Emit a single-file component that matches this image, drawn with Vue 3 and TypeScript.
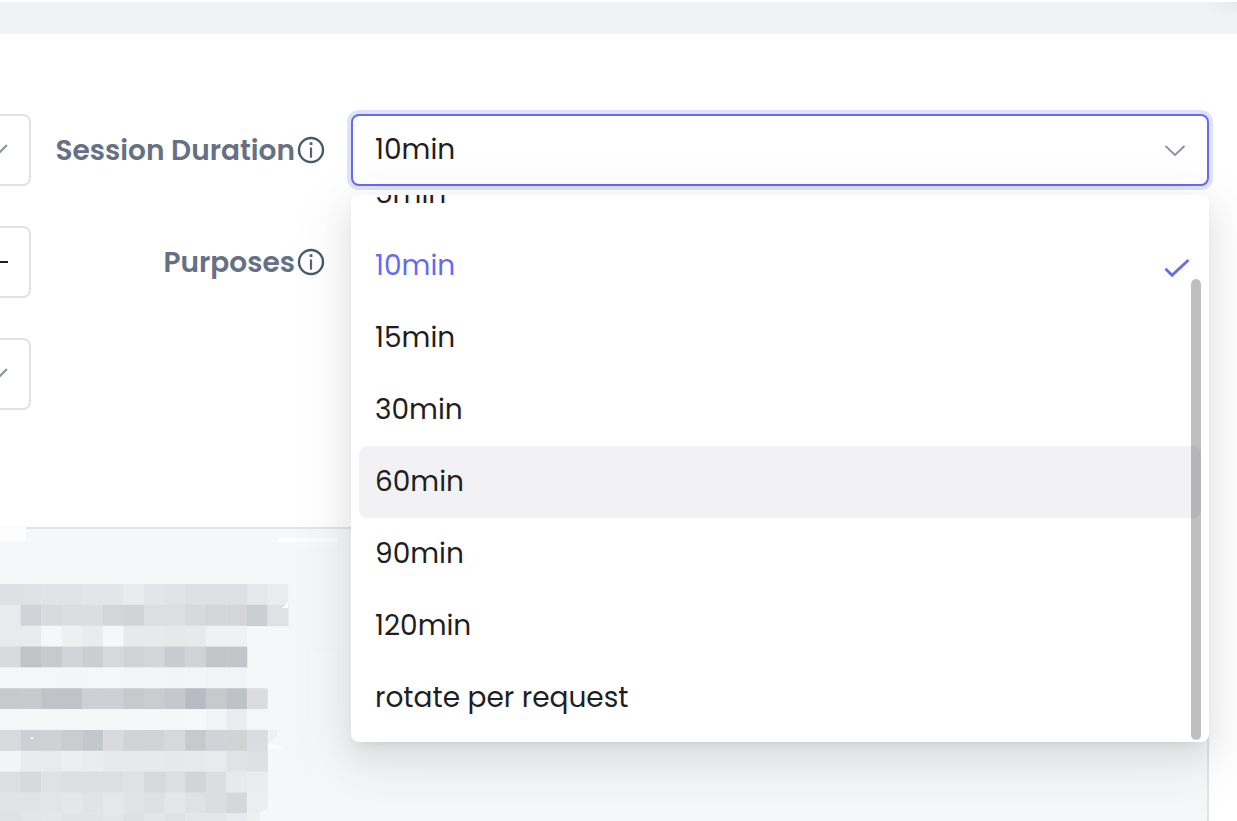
<script setup lang="ts">
import { onMounted, ref } from 'vue'

const durations: string[] = ['5min', '10min', '15min', '30min', '60min', '90min', '120min', 'rotate per request']
const duration = ref('10min')
const active = ref('60min')
const open = ref(true)
const list = ref<HTMLElement | null>(null)

function choose(value: string): void {
  duration.value = value
  open.value = false
}

onMounted(() => {
  if (list.value) list.value.scrollTop = list.value.scrollHeight
})

// Shades of the redacted block, one entry per cell; "-" leaves the cell empty.
const rows: string[] = [
  'dfe0e3 e0e1e4 e2e3e6 e2e3e6 e4e5e8 e4e5e8 eaebed e4e5e8 e2e3e6 dfe0e3 dfe0e3 dfe0e3 e6e7ea ebecee',
  'e9eaed cfd3d7 d8dadd dcdde0 dcdde0 d4d5d8 d2d3d6 dcdee1 dddee1 d8d9dc d4d5d8 d4d5d8 cbced2 e0e1e4',
  'e9eaed e9eaed f6f7f9 eeeff0 eaebed f6f7f9 e8e9ec e8e9eb e7e8e9 e8e9ea f0f1f3 f0f1f3 - -',
  'd9dadd c1c3c8 c6c9cd d3d4d7 cccdd0 d7d8db cfd3d7 d5d6d9 cacbcf cfd3d7 c3c5ca c3c5ca - -',
  'f5f6f7 f5f6f7 f5f6f8 f4f5f7 f5f6f8 f5f6f8 f4f5f7 f4f5f7 f3f4f6 f4f5f7 f2f3f5 f2f3f5 - -',
  'c7cacd c9cacd c0c3c7 c0c3c7 cdd0d4 cdd0d4 c6cacd cbccd0 c5c9cd b8bbc6 c8c9cd bfc2c6 dbdce0 -',
  'f6f7f8 f6f7f8 f6f7f8 f5f6f8 f6f7f8 f6f7f8 f6f7f8 f6f7f8 f6f7f8 f7f8f9 f2f3f6 ebecf1 f5f6f8 -',
  'd9dadd cdd1d5 d0d1d5 cbccd0 c4c8cc d9dadd d0d3d6 d1d3d6 d7d8db c7cacd d0d3d7 d1d3d5 dbdce0 -',
  'f3f4f6 eaebed e8eaed edeef1 ebecef e8e9eb e8e9eb e8e9eb e7e8ea e8e9eb e9eaec e2e3e7 dfe0e4 -',
  'dddee1 d6d8db e0e1e4 dddee1 dddee1 dddee1 e0e1e4 d6d8db dddee1 d1d5d7 dcdde0 e8e9ec ebecef -',
  'e2e3e6 e2e3e6 e3e4e7 e5e6e9 e2e3e6 e6e7ea e2e3e6 dfe0e3 e5e6e9 e0e1e4 dcdde0 d6d7da ecedf0 -',
  'e0e1e4 e3e4e7 e5e6e9 e2e3e6 e2e3e6 e4e5e8 dfe0e3 e4e5e8 e0e1e4 e5e6e9 e5e6e9 e9eaed eeeff1 -',
]
const cells = rows.flatMap((row, y) =>
  row.split(' ').flatMap((shade, x) => (shade === '-' ? [] : [{ x, y, fill: '#' + shade }])),
)
</script>

<template>
  <main class="page">
    <div class="strip"></div>
    <section class="card">
      <form class="form" @submit.prevent>
        <button type="button" class="stub" aria-label="Open previous list">
          <svg width="22" height="14" viewBox="0 0 22 14"><path d="M2 2l9 9 9-9" fill="none" stroke="#8a929e" stroke-width="2" /></svg>
        </button>
        <label class="label" for="duration">
          <span class="label-text">Session Duration</span>
          <svg class="info" width="28" height="28" viewBox="0 0 28 28">
            <circle cx="14" cy="14" r="12" fill="none" stroke="#4b586a" stroke-width="2.4" />
            <path d="M14 11.5v10.2" stroke="#566275" stroke-width="2.2" />
            <path d="M14 6.2v2.8" stroke="#566275" stroke-width="2.8" />
          </svg>
        </label>
        <div class="field">
          <select id="duration" v-model="duration" class="select" @mousedown.prevent="open = !open">
            <option v-for="d in durations" :key="d" :value="d">{{ d }}</option>
          </select>
          <svg class="arrow" width="22" height="14" viewBox="0 0 22 14"><path d="M1.5 2l9.5 9 9.5-9" fill="none" stroke="#8a929e" stroke-width="1.8" /></svg>
          <div v-if="open" class="menu">
            <ul ref="list" class="list" role="listbox" aria-label="Session Duration">
              <li
                v-for="d in durations"
                :key="d"
                role="option"
                class="option"
                :class="{ selected: d === duration, active: d === active }"
                :aria-selected="d === duration"
                @mouseenter="active = d"
                @click="choose(d)"
              >
                <span>{{ d }}</span>
                <svg v-if="d === duration" width="26" height="20" viewBox="0 0 26 20">
                  <path d="M1.5 10.8L8 17.3L24.5 2" fill="none" stroke="#646cf0" stroke-width="2.8" />
                </svg>
              </li>
            </ul>
            <div class="thumb"></div>
          </div>
        </div>

        <button type="button" class="stub" aria-label="Adjust value">
          <svg width="22" height="14" viewBox="0 0 22 14"><path d="M1 7h20" stroke="#1f1f1f" stroke-width="2" /></svg>
        </button>
        <span class="label">
          <span class="label-text">Purposes</span>
          <svg class="info" width="28" height="28" viewBox="0 0 28 28">
            <circle cx="14" cy="14" r="12" fill="none" stroke="#4b586a" stroke-width="2.4" />
            <path d="M14 11.5v10.2" stroke="#566275" stroke-width="2.2" />
            <path d="M14 6.2v2.8" stroke="#566275" stroke-width="2.8" />
          </svg>
        </span>
        <span></span>

        <button type="button" class="stub" aria-label="Open next list">
          <svg width="22" height="14" viewBox="0 0 22 14"><path d="M2 2l9 9 9-9" fill="none" stroke="#8a929e" stroke-width="2" /></svg>
        </button>
      </form>

      <div class="panel">
        <svg class="redaction" width="340" height="310" viewBox="0 0 340 310" aria-hidden="true">
          <path d="M0 0h26v17H0z" fill="#fdfdfe" />
          <path d="M280 13h57v4h-61z" fill="#fcfdfd" />
          <path d="M288 25h51v100h-30v130h-21z" fill="#f4f5f7" opacity=".4" />
          <g transform="translate(0 59) scale(20.57 20.85)">
            <rect v-for="c in cells" :key="c.x + '-' + c.y" :x="c.x" :y="c.y" width="1.02" height="1.02" :fill="c.fill" />
          </g>
          <path d="M268 205h9v6l-8 7z" fill="#eff0f2" />
          <path d="M268 219h7l10 5h-17zM288 77v6h-6z" fill="#fafbfc" />
          <path d="M268 282v28h-8v-22z" fill="#f6f7f9" />
          <path d="M31 212h2v2h-2z" fill="#fff" />
        </svg>
      </div>
    </section>
  </main>
</template>

<style>
body {
  margin: 0;
  overflow: hidden;
}
</style>

<style scoped>
* {
  box-sizing: border-box;
}
.page {
  display: flex;
  flex-direction: column;
  height: 100vh;
  overflow: hidden;
  background: #fff;
  color: #1f1f1f;
  font-family: Poppins, Inter, 'Liberation Sans', sans-serif;
  font-size: 28px;
  line-height: 44px;
}
.strip {
  flex: none;
  height: 32px;
  margin-top: 2px;
  background: radial-gradient(ellipse 36px 14px at 100% 0, #e7e8ea 0, #f1f2f4 100%);
}
.card {
  flex: 1;
  display: flex;
  flex-direction: column;
  padding: 80px 28px 0 0;
}
.form {
  display: grid;
  grid-template-columns: 31px 294px minmax(0, 1fr);
  grid-auto-rows: 72px;
  row-gap: 40px;
}
.stub {
  display: flex;
  align-items: center;
  justify-content: flex-end;
  padding: 0 20px 0 0;
  border: 2px solid #e2e2e4;
  border-left: 0;
  border-radius: 0 8px 8px 0;
  background: #fff;
  overflow: hidden;
}
.stub svg {
  flex: none;
}
.label {
  display: flex;
  align-items: center;
  justify-content: flex-end;
  gap: 2px;
  color: #667085;
  font-weight: 600;
  white-space: nowrap;
}
.label-text {
  padding-top: 2px;
}
.info {
  flex: none;
}
.field {
  position: relative;
  margin-left: 26px;
}
.select {
  display: block;
  width: 100%;
  height: 72px;
  padding: 0 64px 0 22px;
  border: 2px solid #646cf0;
  border-radius: 8px;
  outline: none;
  box-shadow: 0 0 0 4px #e0e1fc;
  background: #fff;
  color: inherit;
  font: inherit;
  appearance: none;
}
.arrow {
  position: absolute;
  top: 30px;
  right: 23px;
  pointer-events: none;
}
.menu {
  position: absolute;
  z-index: 2;
  top: calc(100% + 9px);
  left: 0;
  right: 0;
  border-radius: 8px;
  background: #fff;
  box-shadow:
    0 12px 32px rgba(0, 0, 0, 0.08),
    0 6px 12px -8px rgba(0, 0, 0, 0.12),
    0 18px 56px 16px rgba(0, 0, 0, 0.05);
}
.list {
  max-height: 547px;
  margin: 0;
  padding: 8px;
  border-radius: 8px;
  list-style: none;
  overflow-y: auto;
  scrollbar-width: none;
}
.option {
  display: flex;
  align-items: center;
  justify-content: space-between;
  height: 72px;
  padding: 0 11px 0 16px;
  border-radius: 8px;
  cursor: pointer;
}
.option svg {
  margin-top: 3px;
}
.option.active {
  background: #f2f2f4;
}
.option.selected {
  color: #646cf0;
}
.thumb {
  position: absolute;
  top: 84px;
  right: 8px;
  bottom: 2px;
  width: 10px;
  border-radius: 5px;
  background: rgba(0, 0, 0, 0.25);
}
.panel {
  position: relative;
  flex: 1;
  margin-top: 117px;
  border: solid #e1e3e9;
  border-width: 2px 2px 0 0;
  background: #f6f7f9;
}
.redaction {
  position: absolute;
  top: -4px;
  left: 0;
}
</style>
